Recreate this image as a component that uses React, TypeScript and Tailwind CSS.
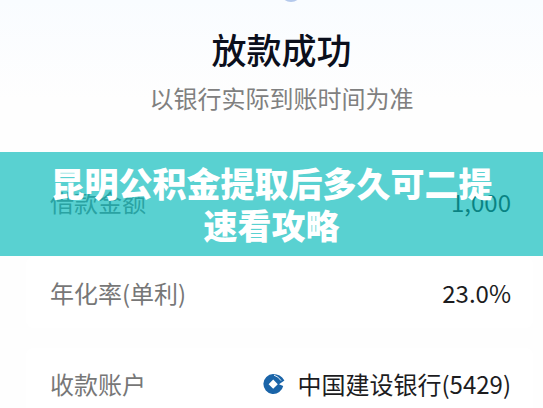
import type { ReactNode } from "react";

const FONT = "font-['Noto_Sans_CJK_SC','Noto_Sans',sans-serif]";

function BankLogo() {
  return (
    <svg viewBox="0 0 22 22" className="h-[22px] w-[22px] shrink-0" aria-hidden="true">
      <path
        fill="#1a64a8"
        fillRule="evenodd"
        d="M10 1A10 10 0 1 0 20.2 13L16 11.2L21.4 7.4Q17.4 1 10 1ZM10.2 6.6L14.8 11.2L10.2 15.8L5.6 11.2Z"
      />
      <path fill="none" stroke="#ffffff" strokeWidth="0.9" d="M11 2.2Q15.4 3.4 18 7.6" />
    </svg>
  );
}

function Row({ label, children }: { label: string; children: ReactNode }) {
  return (
    <div className="flex h-[71px] items-center justify-between rounded-lg bg-white pr-[22px] pl-6 text-2xl">
      <dt className="text-[#777777]">{label}</dt>
      <dd className="flex items-center gap-3 text-[#1c1c1e]">{children}</dd>
    </div>
  );
}

export default function App() {
  return (
    <main className={`relative overflow-hidden bg-[#fefefe] ${FONT}`}>
      <header className="relative bg-linear-to-b from-[#f9fcff] to-[#fefefe] to-60% pt-7 pb-[52px] pl-5 text-center">
        <span className="absolute -top-5 left-1/2 ml-2 h-[22px] w-[22px] rounded-full bg-[#b4c9ec]" />
        <h1 className="text-[35px] leading-[42px] font-medium text-[#0b0f1c]">放款成功</h1>
        <p className="mt-3 text-2xl leading-8 text-[#808080]">以银行实际到账时间为准</p>
      </header>

      <dl className="flex flex-col gap-5 pr-2.5 pl-[26px]">
        <Row label="借款金额">1,000</Row>
        <Row label="年化率(单利)">23.0%</Row>
        <Row label="收款账户">
          <BankLogo />
          中国建设银行(5429)
        </Row>
      </dl>

      <div className="absolute inset-x-0 top-[152px] flex h-[104px] items-center justify-center bg-[#00b8b8]/65 text-center">
        <h2 className="text-[34px] leading-[42px] font-black text-white">
          昆明公积金提取后多久可二提
          <br />
          速看攻略
        </h2>
      </div>
    </main>
  );
}
